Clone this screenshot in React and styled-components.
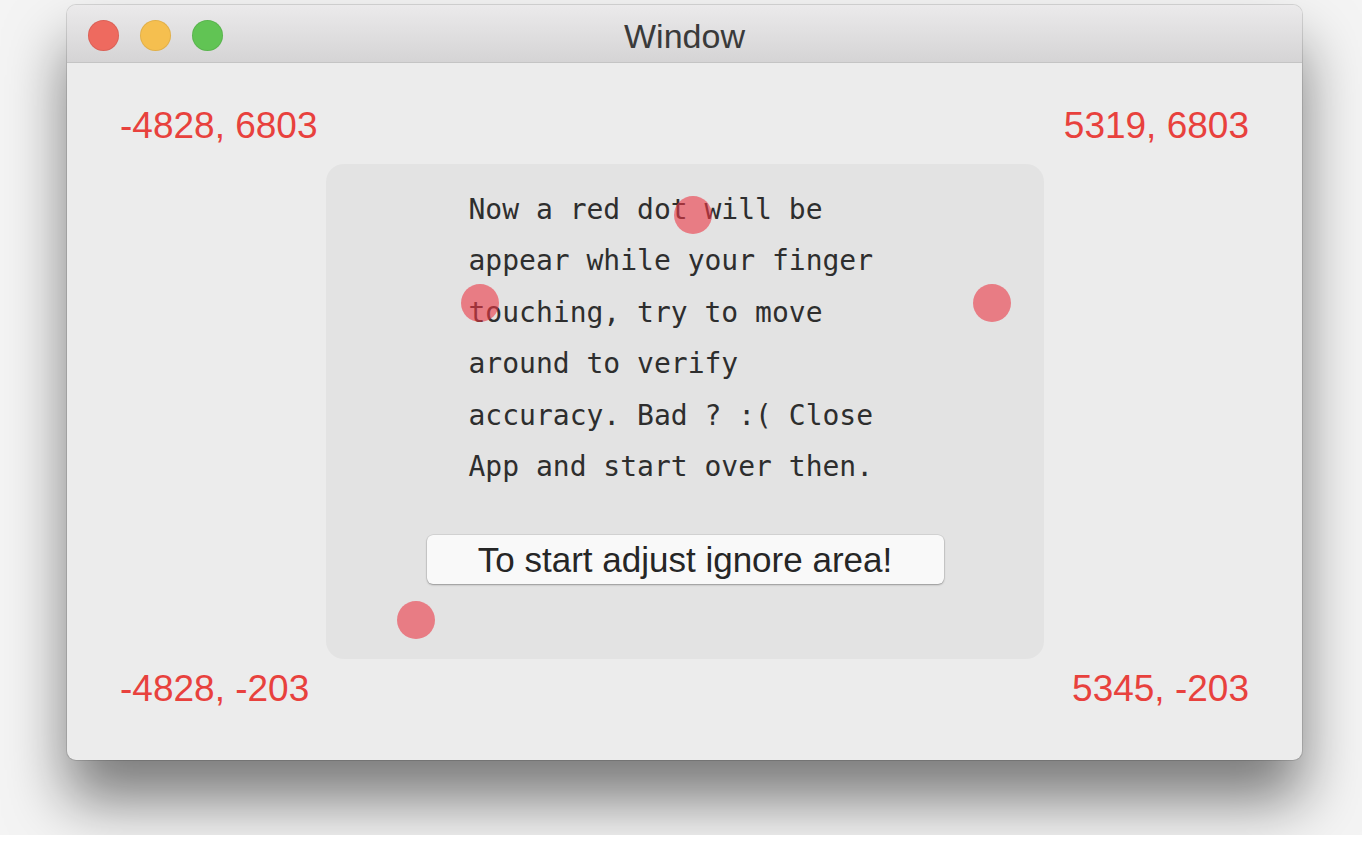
import React from 'react';
import styled, { createGlobalStyle } from 'styled-components';

const GlobalStyle = createGlobalStyle`
  body {
    margin: 0;
    background: #ffffff;
  }
`;

const Stage = styled.div`
  width: 1362px;
  height: 835px;
  overflow: hidden;
  background: #f4f4f4;
  padding: 5px 0 0 67px;
  box-sizing: border-box;
`;

const Window = styled.div`
  width: 1235px;
  height: 755px;
  border-radius: 9px;
  background: #ececec;
  display: flex;
  flex-direction: column;
  box-shadow: 0 40px 60px rgba(0, 0, 0, 0.5), 0 0 0 1px rgba(0, 0, 0, 0.12);
  overflow: hidden;
`;

const TitleBar = styled.div`
  height: 57px;
  display: grid;
  grid-template-columns: 1fr auto 1fr;
  align-items: center;
  padding: 0 21px;
  background: linear-gradient(#ebeaeb, #d5d4d5);
  border-bottom: 1px solid #c4c4c4;
`;

const Lights = styled.div`
  display: flex;
  gap: 21px;
  padding-top: 4px;
`;

const Light = styled.span`
  width: 31px;
  height: 31px;
  border-radius: 50%;
  background: ${(p) => p.color};
  box-shadow: inset 0 0 0 1px rgba(0, 0, 0, 0.08);
`;

const Title = styled.div`
  font-family: 'Liberation Sans', Arial, sans-serif;
  font-size: 34px;
  color: #3a3a3a;
  padding-top: 6px;
`;

const Body = styled.div`
  flex: 1;
  display: flex;
  flex-direction: column;
  padding: 42px 53px 0;
`;

const CoordRow = styled.div`
  display: flex;
  justify-content: space-between;
  font-family: 'Liberation Sans', Arial, sans-serif;
  font-size: 37px;
  line-height: 41px;
  color: #e8413d;
  margin-top: ${(p) => p.top || 0}px;
`;

const Panel = styled.div`
  position: relative;
  align-self: center;
  width: 718px;
  height: 495px;
  margin-top: 18px;
  border-radius: 18px;
  background: #e3e3e3;
  box-sizing: border-box;
  padding: 20px 0 0 143px;
`;

const Message = styled.p`
  margin: 0;
  font-family: 'DejaVu Sans Mono', 'Liberation Mono', monospace;
  font-size: 28px;
  line-height: 51.4px;
  color: #2e2e2e;
  white-space: pre;
`;

const Button = styled.button`
  display: block;
  margin: 43px 0 0 -42px;
  width: 517px;
  height: 49px;
  border: none;
  border-radius: 6px;
  background: #f9f9f9;
  box-shadow: 0 1px 2px rgba(0, 0, 0, 0.3), 0 0 0 0.5px rgba(0, 0, 0, 0.12);
  font-family: 'Liberation Sans', Arial, sans-serif;
  font-size: 35px;
  color: #262626;
  padding: 0;
`;

const Dot = styled.span`
  position: absolute;
  width: 38px;
  height: 38px;
  border-radius: 50%;
  background: rgba(235, 55, 68, 0.6);
  left: ${(p) => p.x - 19}px;
  top: ${(p) => p.y - 19}px;
`;

const lines = [
  'Now a red dot will be',
  'appear while your finger',
  'touching, try to move',
  'around to verify',
  'accuracy. Bad ? :( Close',
  'App and start over then.',
];

const dots = [
  { x: 367, y: 51 },
  { x: 154, y: 139 },
  { x: 666, y: 139 },
  { x: 90, y: 456 },
];

export default function App() {
  return (
    <>
      <GlobalStyle />
      <Stage>
        <Window>
          <TitleBar>
            <Lights>
              <Light color="#ee6a5f" />
              <Light color="#f5bf4f" />
              <Light color="#61c454" />
            </Lights>
            <Title>Window</Title>
            <span />
          </TitleBar>
          <Body>
            <CoordRow>
              <span>-4828, 6803</span>
              <span>5319, 6803</span>
            </CoordRow>
            <Panel>
              <Message>{lines.join('\n')}</Message>
              <Button>To start adjust ignore area!</Button>
              {dots.map((d, i) => (
                <Dot key={i} x={d.x} y={d.y} />
              ))}
            </Panel>
            <CoordRow top={9}>
              <span>-4828, -203</span>
              <span>5345, -203</span>
            </CoordRow>
          </Body>
        </Window>
      </Stage>
    </>
  );
}
